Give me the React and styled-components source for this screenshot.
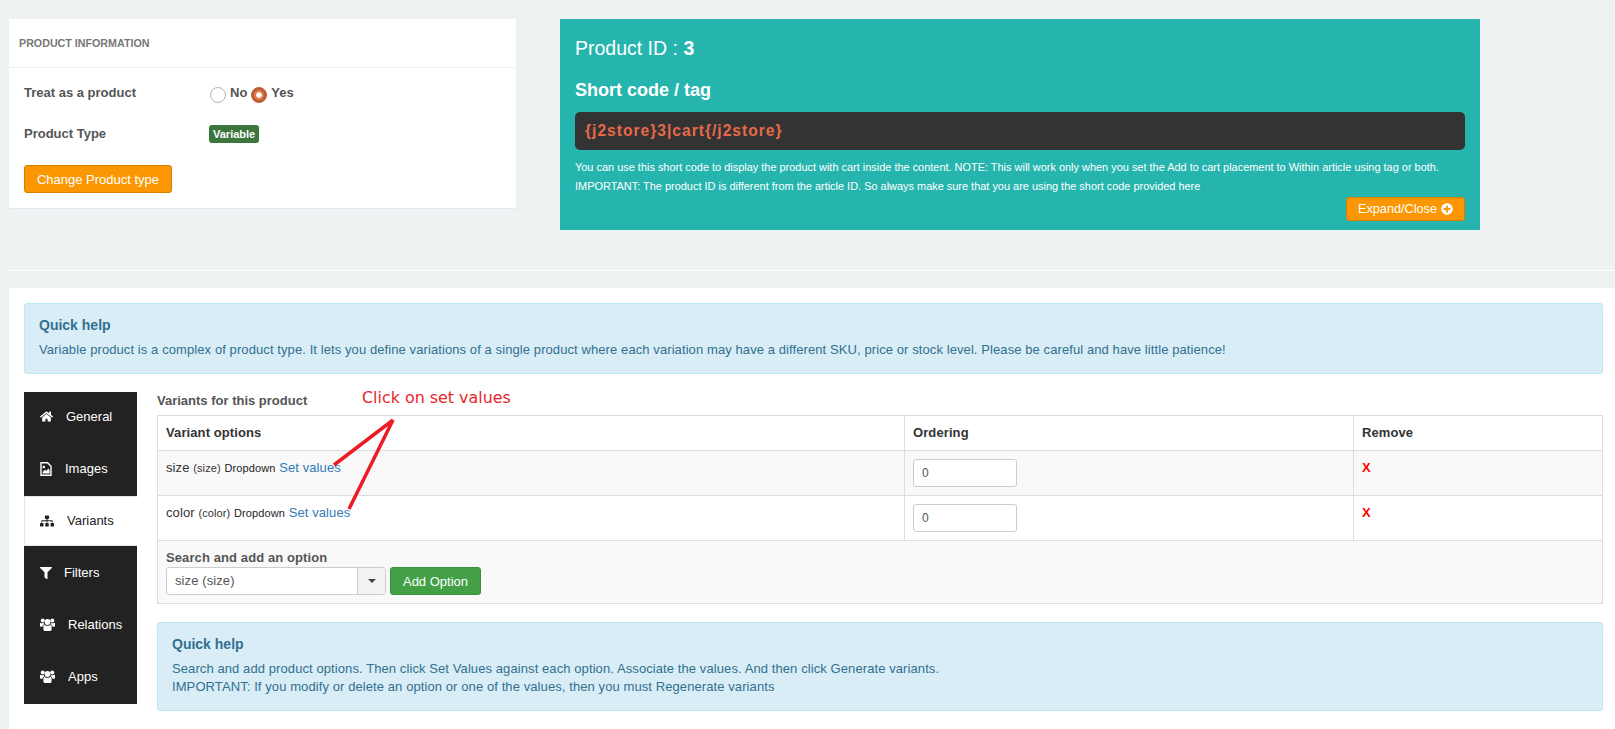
import React from 'react';
import styled, { createGlobalStyle } from 'styled-components';
import { FaHome, FaSitemap, FaFilter, FaPlusCircle } from 'react-icons/fa';

const GlobalStyle = createGlobalStyle`
  html, body {
    margin: 0;
    padding: 0;
    background: #eef2f3;
  }
  body {
    font-family: "Liberation Sans", Arial, sans-serif;
    font-size: 13px;
    line-height: 18px;
    color: #555;
  }
  * { box-sizing: border-box; }
`;

// drawn by hand, the old font icon has a filled picture inside the file
const ImageFileIcon = () => (
  <svg width="12" height="14" viewBox="0 0 12 14">
    <path d="M1 .8H7.6L11 4.2V13.2H1Z" fill="none" stroke="currentColor" strokeWidth="1.4" />
    <circle cx="3.8" cy="5" r="1.3" fill="currentColor" />
    <path d="M2.6 11.6V10L5 7.8 6.4 9 8.2 6.6 9.6 8V11.6Z" fill="currentColor" />
  </svg>
);

const UsersIcon = () => (
  <svg width="15" height="13" viewBox="0 0 15 13" fill="currentColor">
    <circle cx="7.5" cy="4" r="2.9" />
    <circle cx="2.7" cy="2.5" r="2" />
    <circle cx="12.3" cy="2.5" r="2" />
    <path d="M3.4 8.4C3.4 7.4 4 6.9 5 7.2 6.6 7.9 8.4 7.9 10 7.2 11 6.9 11.6 7.4 11.6 8.4V11.6C11.6 12.5 11 13 10.2 13H4.8C4 13 3.4 12.5 3.4 11.6Z" />
    <path d="M0 5.6C0 5 .4 4.7 1 4.9 1.8 5.2 2.6 5.3 3.6 5.1 3.8 6 4.2 6.3 4.6 6.6 3.3 6.6 2.6 7.4 2.5 8.8H1C.4 8.8 0 8.4 0 7.8Z" />
    <path d="M15 5.6C15 5 14.6 4.7 14 4.9 13.2 5.2 12.4 5.3 11.4 5.1 11.2 6 10.8 6.3 10.4 6.6 11.7 6.6 12.4 7.4 12.5 8.8H14C14.6 8.8 15 8.4 15 7.8Z" />
  </svg>
);

const tabs = [
  { name: 'General', icon: <FaHome size={13} />, width: 26 },
  { name: 'Images', icon: <ImageFileIcon />, width: 25 },
  { name: 'Variants', icon: <FaSitemap size={14} />, width: 27, active: true },
  { name: 'Filters', icon: <FaFilter size={12} />, width: 24 },
  { name: 'Relations', icon: <UsersIcon />, width: 28 },
  { name: 'Apps', icon: <UsersIcon />, width: 28 },
];

const App = () => {
  return (
    <Page>
      <GlobalStyle />
      <TopRow>
        <InfoPanel>
          <InfoHeader>PRODUCT INFORMATION</InfoHeader>
          <InfoBody>
            <FieldRow>
              <FieldLabel>Treat as a product</FieldLabel>
              <RadioGroup>
                <Radio />
                <RadioText>No</RadioText>
                <Radio $checked />
                <RadioText>Yes</RadioText>
              </RadioGroup>
            </FieldRow>
            <FieldRow>
              <FieldLabel>Product Type</FieldLabel>
              <Badge>Variable</Badge>
            </FieldRow>
            <OrangeButton>Change Product type</OrangeButton>
          </InfoBody>
        </InfoPanel>
        <TealPanel>
          <ProductId>
            Product ID : <b>3</b>
          </ProductId>
          <ShortTitle>Short code / tag</ShortTitle>
          <CodeBar>{'{j2store}3|cart{/j2store}'}</CodeBar>
          <Note>
            You can use this short code to display the product with cart inside
            the content. NOTE: This will work only when you set the Add to cart
            placement to Within article using tag or both.
          </Note>
          <Note>
            IMPORTANT: The product ID is different from the article ID. So
            always make sure that you are using the short code provided here
          </Note>
          <ExpandRow>
            <ExpandButton>
              Expand/Close <FaPlusCircle size={12} />
            </ExpandButton>
          </ExpandRow>
        </TealPanel>
      </TopRow>
      <Divider />
      <MainPanel>
        <Alert>
          <AlertTitle>Quick help</AlertTitle>
          <AlertText>
            Variable product is a complex of product type. It lets you define
            variations of a single product where each variation may have a
            different SKU, price or stock level. Please be careful and have
            little patience!
          </AlertText>
        </Alert>
        <Columns>
          <Sidebar>
            {tabs.map((tab) => (
              <Tab key={tab.name} $active={tab.active}>
                <TabIcon $width={tab.width}>{tab.icon}</TabIcon>
                {tab.name}
              </Tab>
            ))}
          </Sidebar>
          <Content>
            <Annotation>Click on set values</Annotation>
            <Arrows width="80" height="100" viewBox="0 0 80 100">
              <line x1="68" y1="4" x2="9" y2="49" />
              <line x1="68" y1="4" x2="24" y2="93" />
            </Arrows>
            <SectionTitle>Variants for this product</SectionTitle>
            <Table>
              <colgroup>
                <col width="747" />
                <col width="449" />
                <col />
              </colgroup>
              <thead>
                <tr>
                  <Th>Variant options</Th>
                  <Th>Ordering</Th>
                  <Th>Remove</Th>
                </tr>
              </thead>
              <tbody>
                <Row $striped>
                  <Td>
                    size <Small>(size)</Small> <Type>Dropdown</Type>{' '}
                    <SetLink>Set values</SetLink>
                  </Td>
                  <Td>
                    <OrderInput defaultValue="0" />
                  </Td>
                  <Td>
                    <RemoveX>X</RemoveX>
                  </Td>
                </Row>
                <Row>
                  <Td>
                    color <Small>(color)</Small> <Type>Dropdown</Type>{' '}
                    <SetLink>Set values</SetLink>
                  </Td>
                  <Td>
                    <OrderInput defaultValue="0" />
                  </Td>
                  <Td>
                    <RemoveX>X</RemoveX>
                  </Td>
                </Row>
                <Row $striped>
                  <SearchCell colSpan={3}>
                    <SearchLabel>Search and add an option</SearchLabel>
                    <SearchControls>
                      <Select>
                        <SelectValue>size (size)</SelectValue>
                        <SelectArrow>
                          <Caret />
                        </SelectArrow>
                      </Select>
                      <GreenButton>Add Option</GreenButton>
                    </SearchControls>
                  </SearchCell>
                </Row>
              </tbody>
            </Table>
            <HelpBox>
              <AlertTitle>Quick help</AlertTitle>
              <AlertText>
                Search and add product options. Then click Set Values against
                each option. Associate the values. And then click Generate
                variants.
              </AlertText>
              <AlertText>
                IMPORTANT: If you modify or delete an option or one of the
                values, then you must Regenerate variants
              </AlertText>
            </HelpBox>
          </Content>
        </Columns>
      </MainPanel>
    </Page>
  );
};

const Page = styled.div`
  height: 729px;
  overflow: hidden;
  padding: 19px 0 0 9px;
`;

const TopRow = styled.div`
  display: flex;
  align-items: flex-start;
  gap: 44px;
`;

const InfoPanel = styled.section`
  width: 507px;
  height: 190px;
  background: #fff;
  border-bottom: 1px solid #e4e8ea;
`;

const InfoHeader = styled.h4`
  margin: 0;
  height: 49px;
  padding: 16px 10px 0;
  font-size: 10.7px;
  font-weight: bold;
  line-height: 16px;
  color: #777;
  border-bottom: 1px solid #eef0f2;
`;

const InfoBody = styled.div`
  padding: 16px 15px 0;
`;

const FieldRow = styled.div`
  display: flex;
  align-items: flex-start;
  height: 41px;
`;

const FieldLabel = styled.div`
  width: 185px;
  font-weight: bold;
`;

const RadioGroup = styled.div`
  display: flex;
  align-items: flex-start;
  padding-left: 1px;
  font-weight: bold;
`;

const Radio = styled.span`
  width: 16px;
  height: 16px;
  margin-top: 3px;
  border-radius: 50%;
  background: ${(p) =>
    p.$checked
      ? 'radial-gradient(circle, #fff 0 2.4px, #dc7a50 3.2px 4.5px, #c25a32 5.5px)'
      : '#fff'};
  border: ${(p) => (p.$checked ? '1px solid #bb5a35' : '1.5px solid #b4b4b4')};
`;

const RadioText = styled.span`
  margin: 0 4px 0 4px;
`;

const Badge = styled.span`
  height: 18px;
  padding: 0 4px;
  border-radius: 3px;
  background: #3c763d;
  color: #fff;
  font-size: 11px;
  font-weight: bold;
  line-height: 18px;
`;

const OrangeButton = styled.button`
  display: block;
  width: 148px;
  height: 28px;
  margin-top: -1px;
  padding: 0;
  background: #fb9702;
  border: 1px solid #d97f00;
  border-radius: 3px;
  color: #fff;
  font-family: inherit;
  font-size: 13px;
`;

const TealPanel = styled.section`
  width: 920px;
  height: 211px;
  padding: 0 15px;
  background: #26b5ae;
  color: #fff;
`;

const ProductId = styled.div`
  margin-top: 16px;
  padding-top: 1px;
  font-size: 19.5px;
  line-height: 24px;
`;

const ShortTitle = styled.div`
  margin-top: 19px;
  font-size: 18px;
  font-weight: bold;
  line-height: 22px;
`;

const CodeBar = styled.div`
  height: 38px;
  margin: 11px 0 8px;
  padding-left: 10px;
  background: #333;
  border-radius: 5px;
  color: #e8694a;
  font-size: 15.6px;
  font-weight: bold;
  line-height: 37px;
  letter-spacing: 1px;
`;

const Note = styled.div`
  font-size: 10.95px;
  line-height: 19px;
  white-space: nowrap;
`;

const ExpandRow = styled.div`
  display: flex;
  justify-content: flex-end;
  margin-top: 1px;
`;

const ExpandButton = styled.button`
  display: flex;
  align-items: center;
  justify-content: center;
  gap: 4px;
  width: 119px;
  height: 24px;
  padding: 0;
  background: #fb9702;
  border: 1px solid #d97f00;
  border-radius: 3px;
  color: #fff;
  font-family: inherit;
  font-size: 12.7px;
`;

const Divider = styled.div`
  height: 1px;
  margin: 40px 0 17px;
  background: #fbfcfc;
`;

const MainPanel = styled.section`
  background: #fff;
  padding: 15px 12px 40px 15px;
`;

const Alert = styled.div`
  height: 71px;
  padding: 11px 14px;
  background: #d9edf7;
  border: 1px solid #bce8f1;
  border-radius: 3px;
  color: #31708f;
`;

const AlertTitle = styled.div`
  font-size: 14px;
  font-weight: bold;
  line-height: 20px;
  margin-bottom: 6px;
`;

const AlertText = styled.div`
  font-size: 13px;
  line-height: 18px;
  letter-spacing: 0.09px;
`;

const Columns = styled.div`
  display: flex;
  align-items: flex-start;
  gap: 20px;
  margin-top: 18px;
`;

const Sidebar = styled.nav`
  width: 113px;
  flex: none;
  background: #222;
`;

const Tab = styled.div`
  display: flex;
  align-items: center;
  height: ${(p) => (p.$active ? '50px' : '52px')};
  margin-bottom: ${(p) => (p.$active ? '2px' : '0')};
  padding-left: ${(p) => (p.$active ? '15px' : '16px')};
  padding-bottom: ${(p) => (p.$active ? '0' : '3px')};
  color: ${(p) => (p.$active ? '#222' : '#fff')};
  background: ${(p) => (p.$active ? '#fff' : '#222')};
  border: ${(p) => (p.$active ? '1px solid #e4e4e4' : 'none')};
  border-right: none;
  font-size: 13px;
`;

const TabIcon = styled.span`
  display: flex;
  width: ${(p) => p.$width}px;
`;

const Content = styled.div`
  position: relative;
  flex: 1;
  min-width: 0;
`;

const Annotation = styled.div`
  position: absolute;
  left: 205px;
  top: -4px;
  color: #e8262c;
  font-family: "DejaVu Sans", sans-serif;
  font-size: 15.9px;
  line-height: 20px;
`;

const Arrows = styled.svg`
  position: absolute;
  left: 168px;
  top: 24px;
  z-index: 1;
  line {
    stroke: #ed1c24;
    stroke-width: 3.5;
  }
`;

const SectionTitle = styled.div`
  height: 23px;
  font-weight: bold;
`;

const Table = styled.table`
  width: 100%;
  table-layout: fixed;
  border-collapse: collapse;
  letter-spacing: 0.1px;
`;

const Th = styled.th`
  height: 35px;
  padding: 0 8px;
  border: 1px solid #ddd;
  text-align: left;
  color: #333;
  font-size: 13px;
`;

const Row = styled.tr`
  background: ${(p) => (p.$striped ? '#f9f9f9' : '#fff')};
`;

const Td = styled.td`
  height: 45px;
  padding: 8px;
  border: 1px solid #ddd;
  vertical-align: top;
  color: #333;
`;

const Small = styled.small`
  font-size: 11px;
`;

const Type = styled.span`
  font-size: 11px;
  color: #222;
`;

const SetLink = styled.a`
  color: #337ab7;
`;

const OrderInput = styled.input`
  display: block;
  width: 104px;
  height: 28px;
  padding: 0 8px;
  background: #fff;
  border: 1px solid #ccc;
  border-radius: 3px;
  color: #555;
  font-family: inherit;
  font-size: 12px;
`;

const RemoveX = styled.span`
  color: #f00;
  font-weight: bold;
`;

const SearchCell = styled.td`
  height: 63px;
  padding: 9px 8px 0;
  border: 1px solid #ddd;
  vertical-align: top;
`;

const SearchLabel = styled.div`
  margin-bottom: 2px;
  font-weight: bold;
  line-height: 15px;
`;

const SearchControls = styled.div`
  display: flex;
  gap: 4px;
`;

const Select = styled.div`
  display: flex;
  width: 220px;
  height: 28px;
  background: #fff;
  border: 1px solid #ccc;
  border-radius: 3px;
`;

const SelectValue = styled.div`
  flex: 1;
  padding-left: 8px;
  line-height: 26px;
`;

const SelectArrow = styled.div`
  display: flex;
  align-items: center;
  justify-content: center;
  width: 28px;
  background: #f2f2f2;
  border-left: 1px solid #ccc;
`;

const Caret = styled.span`
  border-top: 4px solid #444;
  border-left: 4px solid transparent;
  border-right: 4px solid transparent;
`;

const GreenButton = styled.button`
  width: 91px;
  height: 28px;
  padding: 0;
  background: #43a047;
  border: 1px solid #3b8e40;
  border-radius: 3px;
  color: #fff;
  font-family: inherit;
  font-size: 13px;
`;

const HelpBox = styled(Alert)`
  height: 89px;
  margin-top: 18px;
`;

export default App;
